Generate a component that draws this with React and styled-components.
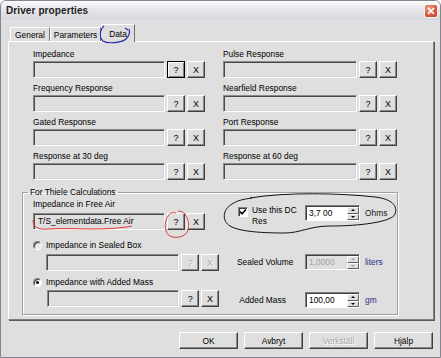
import React from 'react'
import styled, { createGlobalStyle } from 'styled-components'

const GlobalStyle = createGlobalStyle`
	html, body {
		margin: 0;
		padding: 0;
	}
	body {
		background: #ffffff;
		font-family: "Liberation Sans", Arial, sans-serif;
		font-size: 8.4px;
		color: #000;
	}
	* {
		box-sizing: border-box;
	}
`

const Window = styled.div`
	position: relative;
	width: 441px;
	height: 358px;
	background-color: #dfdfdf;
	border: 1px solid #85858f;
	border-radius: 6px 6px 0 0;
	display: flex;
	flex-direction: column;
	overflow: hidden;
`
const TitleBar = styled.div`
	display: flex;
	align-items: center;
	height: 19px;
	padding: 0 2px 0 5px;
	background: linear-gradient(#fbfbfc, #e6e6ea 45%, #d6d6dc);
`
const Title = styled.div`
	font-size: 10px;
	font-weight: bold;
	color: #1e1e1e;
	letter-spacing: 0.1px;
`
const CloseBox = styled.div`
	margin-left: auto;
	width: 14px;
	height: 14px;
	border-radius: 3px;
	border: 1px solid #f4f4f4;
	background: radial-gradient(circle at 35% 30%, #f0a48e, #d6563a 60%, #b83a22);
	display: flex;
	align-items: center;
	justify-content: center;
`
const Body = styled.div`
	flex: 1;
	display: flex;
	flex-direction: column;
	padding: 4px 6px 0 7px;
`
const TabStrip = styled.div`
	display: flex;
	align-items: flex-end;
	height: 17px;
	padding-left: 2px;
`
const Tab = styled.div`
	width: ${p => p.$w}px;
	height: ${p => (p.$active ? 18 : 14)}px;
	margin-bottom: ${p => (p.$active ? -1 : 0)}px;
	position: relative;
	z-index: ${p => (p.$active ? 1 : 0)};
	background: #dfdfdf;
	border: 1px solid;
	border-bottom: none;
	border-color: #ffffff #707070 transparent #ffffff;
	display: flex;
	align-items: center;
	justify-content: center;
	padding-top: ${p => (p.$active ? 0 : 1)}px;
`
const Panel = styled.div`
	height: 279px;
	border: 1px solid;
	border-color: #ffffff #808080 #808080 #ffffff;
	box-shadow: 1px 1px 0 #5a5a5a;
	padding: 6px 0 0 24px;
`
const FileGrid = styled.div`
	display: grid;
	grid-template-columns: 172px 174px;
	column-gap: 18px;
	row-gap: 4px;
`
const FileRow = styled.div`
	display: flex;
	flex-direction: column;
`
const Label = styled.div`
	height: 12px;
	line-height: 12px;
	white-space: nowrap;
	color: ${p => (p.$disabled ? '#a0a0a0' : '#000')};
`
const Controls = styled.div`
	display: flex;
	gap: 2px;
	margin-top: ${p => p.$top || 1}px;
	margin-left: ${p => p.$indent || 0}px;
`
const Field = styled.div`
	width: ${p => p.$w}px;
	height: 17px;
	border: 1px solid;
	border-color: #8a8a8a #ffffff #ffffff #8a8a8a;
	box-shadow: inset 1px 1px 0 #4a4a4a, inset -1px -1px 0 #d6d6d6;
	background: #dfdfdf;
	padding: 0 4px;
	line-height: 15px;
	white-space: nowrap;
	overflow: hidden;
`
const SmallButton = styled.button`
	width: 18px;
	height: 17px;
	padding: 0;
	margin: 0;
	font: inherit;
	font-size: 9px;
	color: ${p => (p.disabled ? '#ababab' : '#000')};
	text-shadow: ${p => (p.disabled ? '1px 1px 0 #fff' : 'none')};
	background: #dfdfdf;
	border: 1px solid;
	border-color: ${p => (p.$focused ? '#000' : '#ffffff #404040 #404040 #ffffff')};
	box-shadow: ${p =>
		p.$focused ? 'inset 1px 1px 0 #fff, inset -1px -1px 0 #808080' : 'inset -1px -1px 0 #8a8a8a'};
	display: flex;
	align-items: center;
	justify-content: center;
`
const GroupBox = styled.fieldset`
	margin: 7px 0 0 -11px;
	width: 376px;
	height: 128px;
	padding: 0;
	border: 1px solid #a0a0a0;
	box-shadow: inset 1px 1px 0 #fff, 1px 1px 0 #fff;
	display: flex;
`
const Legend = styled.legend`
	margin-left: 5px;
	padding: 0 2px;
	line-height: 11px;
	height: 11px;
`
const LeftCol = styled.div`
	width: 196px;
	padding-left: 10px;
	display: flex;
	flex-direction: column;
`
const RightCol = styled.div`
	flex: 1;
	padding: 7px 0 0 18px;
	display: flex;
	flex-direction: column;
`
const RadioRow = styled.div`
	display: flex;
	align-items: center;
	gap: 4px;
	height: 12px;
	margin-top: ${p => p.$top}px;
`
const Radio = styled.span`
	width: 9px;
	height: 9px;
	border-radius: 50%;
	background: ${p => (p.$dim ? '#e8e8e8' : '#fff')};
	border: 1px solid;
	border-color: #808080 #ffffff #ffffff #808080;
	box-shadow: inset 1px 1px 0 #404040;
	display: flex;
	align-items: center;
	justify-content: center;
	&::after {
		content: '';
		width: 3px;
		height: 3px;
		border-radius: 50%;
		background: ${p => (p.$checked ? '#000' : 'transparent')};
	}
`
const ValueRow = styled.div`
	display: grid;
	grid-template-columns: 68px 55px auto;
	align-items: start;
	margin-top: ${p => p.$top}px;
`
const ValueLabel = styled.div`
	line-height: 16px;
	white-space: nowrap;
`
const CheckWrap = styled.div`
	display: flex;
	align-items: flex-start;
	gap: 4px;
	padding: 2px 0 0 1px;
`
const CheckBox = styled.span`
	flex: none;
	width: 10px;
	height: 10px;
	background: #fff;
	border: 1px solid;
	border-color: #808080 #ffffff #ffffff #808080;
	box-shadow: inset 1px 1px 0 #404040;
	display: flex;
	align-items: center;
	justify-content: center;
`
const CheckText = styled.div`
	width: 50px;
	line-height: 11px;
	margin-top: -2px;
`
const Spinner = styled.div`
	width: 55px;
	height: 16px;
	display: flex;
	border: 1px solid;
	border-color: #808080 #ffffff #ffffff #808080;
	box-shadow: inset 1px 1px 0 #404040;
	background: ${p => (p.$disabled ? '#dfdfdf' : '#fff')};
`
const SpinText = styled.div`
	flex: 1;
	padding: 1px 0 0 3px;
	line-height: 13px;
	color: ${p => (p.$disabled ? '#a0a0a0' : '#000')};
`
const SpinButtons = styled.div`
	width: 12px;
	display: flex;
	flex-direction: column;
	padding: 1px 0 0 0;
`
const SpinHalf = styled.div`
	flex: 1;
	background: #dfdfdf;
	border: 1px solid;
	border-color: #ffffff #606060 #606060 #ffffff;
	display: flex;
	align-items: center;
	justify-content: center;
	&::after {
		content: '';
		border-left: 2px solid transparent;
		border-right: 2px solid transparent;
		${p => (p.$up ? 'border-bottom' : 'border-top')}: 2px solid ${p => (p.$disabled ? '#a0a0a0' : '#000')};
	}
`
const Unit = styled.div`
	margin-left: 5px;
	line-height: 16px;
	color: ${p => (p.$blue ? '#2c2c86' : '#1a1a1a')};
`
const ButtonBar = styled.div`
	display: flex;
	justify-content: flex-end;
	gap: 6px;
	margin-top: 12px;
	padding-right: 1px;
`
const DialogButton = styled.button`
	width: 59px;
	height: 17px;
	padding: 0;
	font: inherit;
	color: ${p => (p.disabled ? '#a8a8a8' : '#000')};
	text-shadow: ${p => (p.disabled ? '1px 1px 0 #fff' : 'none')};
	background: #dfdfdf;
	border: 1px solid;
	border-color: #ffffff #404040 #404040 #ffffff;
	box-shadow: inset -1px -1px 0 #8a8a8a;
`
const Scribbles = styled.svg`
	position: absolute;
	top: -1px;
	left: -1px;
	pointer-events: none;
	z-index: 5;
`

const FileSlot = ({ label, w, focused }) => (
	<FileRow>
		<Label>{label}</Label>
		<Controls>
			<Field $w={w} />
			<SmallButton $focused={focused}>?</SmallButton>
			<SmallButton>X</SmallButton>
		</Controls>
	</FileRow>
)

const SpinBox = ({ value, disabled }) => (
	<Spinner $disabled={disabled}>
		<SpinText $disabled={disabled}>{value}</SpinText>
		<SpinButtons>
			<SpinHalf $up $disabled={disabled} />
			<SpinHalf $disabled={disabled} />
		</SpinButtons>
	</Spinner>
)

export default function App() {
	return (
		<>
			<GlobalStyle />
			<Window>
				<TitleBar>
					<Title>Driver properties</Title>
					<CloseBox>
						<svg width="8" height="8" viewBox="0 0 8 8">
							<path d="M1 1 L7 7 M7 1 L1 7" stroke="#fff" strokeWidth="1.6" />
						</svg>
					</CloseBox>
				</TitleBar>
				<Body>
					<TabStrip>
						<Tab $w={40}>General</Tab>
						<Tab $w={51}>Parameters</Tab>
						<Tab $w={34} $active>
							Data
						</Tab>
					</TabStrip>
					<Panel>
						<FileGrid>
							<FileSlot label="Impedance" w={132} focused />
							<FileSlot label="Pulse Response" w={134} />
							<FileSlot label="Frequency Response" w={132} />
							<FileSlot label="Nearfield Response" w={134} />
							<FileSlot label="Gated Response" w={132} />
							<FileSlot label="Port Response" w={134} />
							<FileSlot label="Response at 30 deg" w={132} />
							<FileSlot label="Response at 60 deg" w={134} />
						</FileGrid>
						<GroupBox>
							<Legend>For Thiele Calculations</Legend>
							<LeftCol>
								<Label>Impedance in Free Air</Label>
								<Controls $top={3}>
									<Field $w={132}>T/S_elementdata.Free Air</Field>
									<SmallButton>?</SmallButton>
									<SmallButton>X</SmallButton>
								</Controls>
								<RadioRow $top={9}>
									<Radio $dim />
									<span>Impedance in Sealed Box</span>
								</RadioRow>
								<Controls $top={3} $indent={13}>
									<Field $w={134} />
									<SmallButton disabled>?</SmallButton>
									<SmallButton disabled>X</SmallButton>
								</Controls>
								<RadioRow $top={5}>
									<Radio $checked />
									<span>Impedance with Added Mass</span>
								</RadioRow>
								<Controls $top={2} $indent={14}>
									<Field $w={133} />
									<SmallButton>?</SmallButton>
									<SmallButton>X</SmallButton>
								</Controls>
							</LeftCol>
							<RightCol>
								<ValueRow $top={0}>
									<CheckWrap>
										<CheckBox>
											<svg width="8" height="8" viewBox="0 0 8 8">
												<path d="M1 3.5 L3 5.8 L7 1.5" stroke="#000" strokeWidth="1.6" fill="none" />
											</svg>
										</CheckBox>
										<CheckText>Use this DC Res</CheckText>
									</CheckWrap>
									<SpinBox value="3,7 00" />
									<Unit>Ohms</Unit>
								</ValueRow>
								<ValueRow $top={27}>
									<ValueLabel>Sealed Volume</ValueLabel>
									<SpinBox value="1,0000" disabled />
									<Unit $blue>liters</Unit>
								</ValueRow>
								<ValueRow $top={22}>
									<ValueLabel>&nbsp;Added Mass</ValueLabel>
									<SpinBox value="100,00" />
									<Unit $blue>gm</Unit>
								</ValueRow>
							</RightCol>
						</GroupBox>
					</Panel>
					<ButtonBar>
						<DialogButton>OK</DialogButton>
						<DialogButton>Avbryt</DialogButton>
						<DialogButton disabled>Verkställ</DialogButton>
						<DialogButton>Hjälp</DialogButton>
					</ButtonBar>
				</Body>
				<Scribbles width="441" height="358" viewBox="0 0 441 358">
					<path
						d="M104 26 C100 29, 99 38, 103 41 C108 44, 121 43, 126 39 C129 36, 130 32, 129 29 M125 28 L128 30"
						stroke="#2a2aa8"
						strokeWidth="1.2"
						fill="none"
					/>
					<path
						d="M33 220 C33 227, 38 230, 48 229 C62 228, 78 229, 92 229 C108 229, 122 228, 132 226"
						stroke="#e03838"
						strokeWidth="1"
						fill="none"
					/>
					<path
						d="M178 211 C186 211, 190 220, 188 230 C186 237, 176 239, 170 236 C164 233, 164 222, 168 216 C170 213, 173 212, 176 213"
						stroke="#e03838"
						strokeWidth="1"
						fill="none"
					/>
					<path
						d="M250 198 C285 192, 340 193, 375 197 C392 199, 398 206, 395 214 C392 222, 360 226, 330 226 C310 226, 300 233, 285 233 C265 233, 240 232, 230 226 C222 221, 222 210, 232 204 C238 200, 245 199, 252 198"
						stroke="#111"
						strokeWidth="1"
						fill="none"
					/>
				</Scribbles>
			</Window>
		</>
	)
}
